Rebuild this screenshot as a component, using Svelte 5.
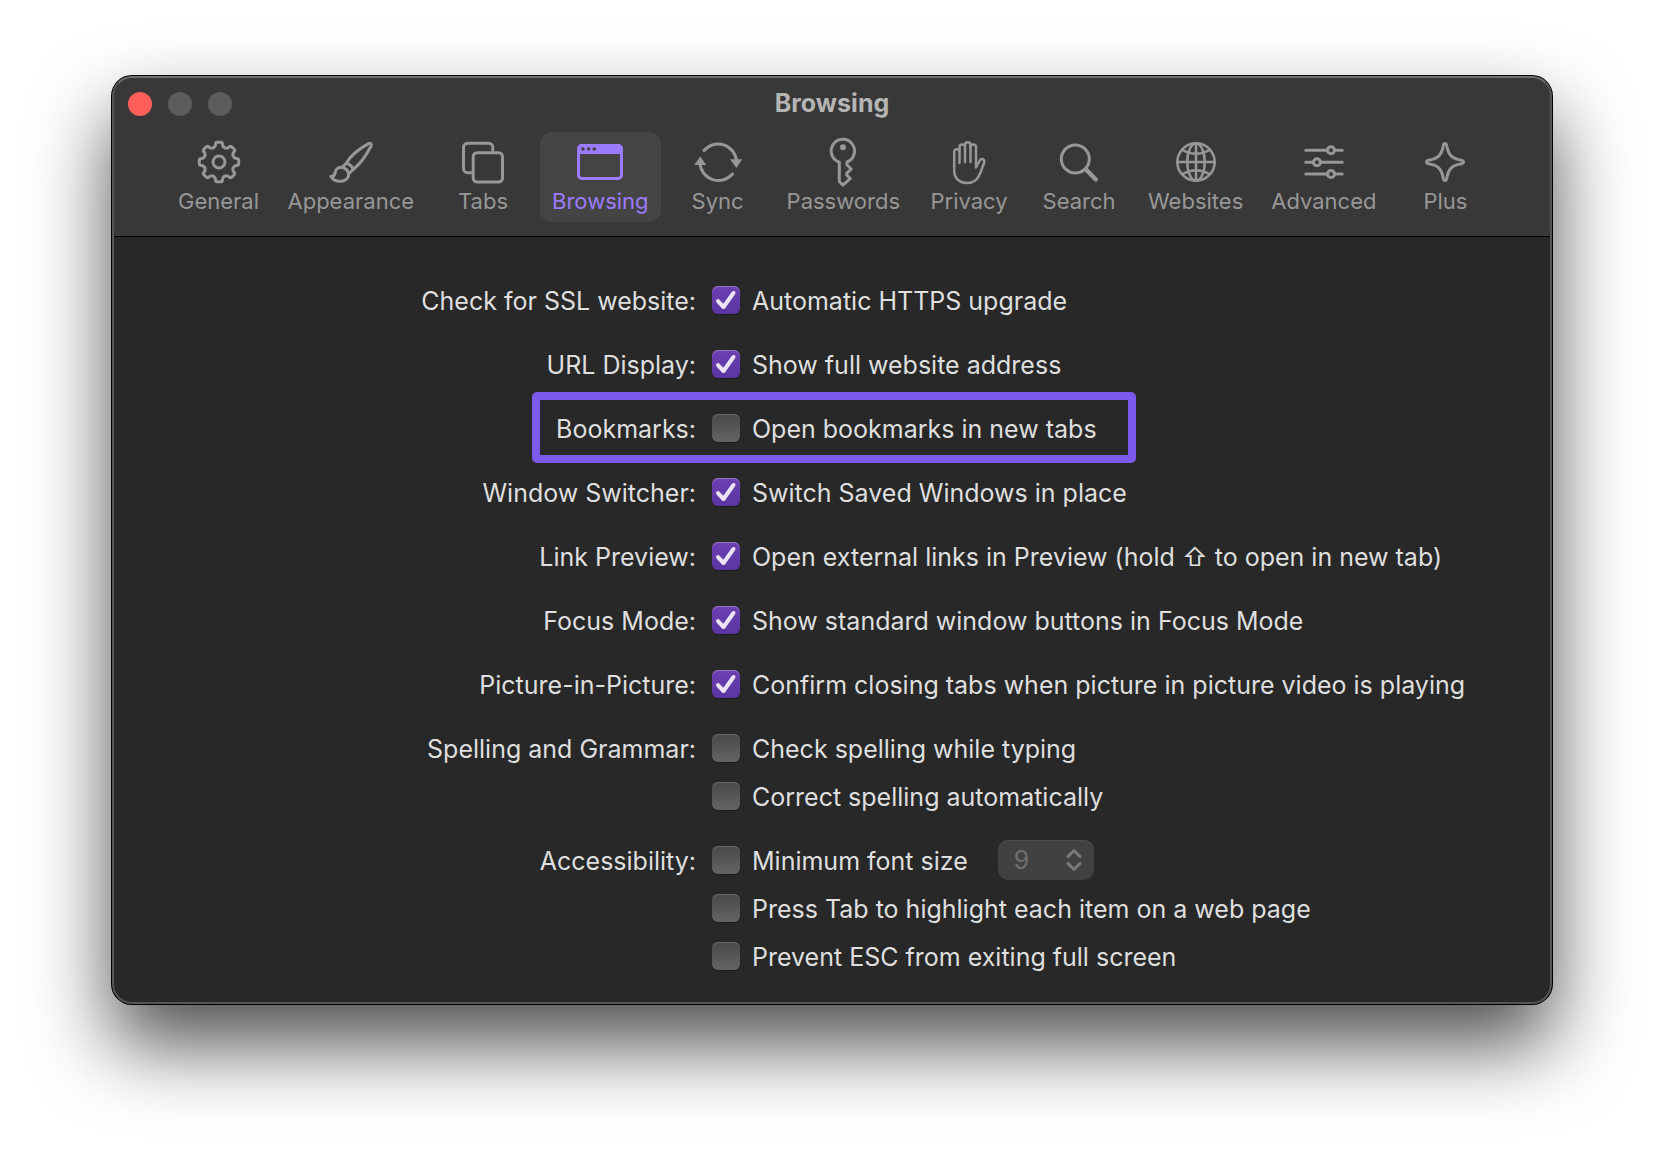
<script lang="ts">
  type Option = { id: string; text: string; checked: boolean; size?: boolean };
  type Row = { label: string; options: Option[]; highlight?: boolean };

  const tabs = [
    'General',
    'Appearance',
    'Tabs',
    'Browsing',
    'Sync',
    'Passwords',
    'Privacy',
    'Search',
    'Websites',
    'Advanced',
    'Plus',
  ];

  let active = $state('Browsing');
  let fontSize = $state('9');

  let rows = $state<Row[]>([
    {
      label: 'Check for SSL website:',
      options: [{ id: 'https', text: 'Automatic HTTPS upgrade', checked: true }],
    },
    {
      label: 'URL Display:',
      options: [{ id: 'url', text: 'Show full website address', checked: true }],
    },
    {
      label: 'Bookmarks:',
      highlight: true,
      options: [{ id: 'bookmarks', text: 'Open bookmarks in new tabs', checked: false }],
    },
    {
      label: 'Window Switcher:',
      options: [{ id: 'switcher', text: 'Switch Saved Windows in place', checked: true }],
    },
    {
      label: 'Link Preview:',
      options: [
        { id: 'preview', text: 'Open external links in Preview (hold ⇧ to open in new tab)', checked: true },
      ],
    },
    {
      label: 'Focus Mode:',
      options: [{ id: 'focus', text: 'Show standard window buttons in Focus Mode', checked: true }],
    },
    {
      label: 'Picture-in-Picture:',
      options: [
        { id: 'pip', text: 'Confirm closing tabs when picture in picture video is playing', checked: true },
      ],
    },
    {
      label: 'Spelling and Grammar:',
      options: [
        { id: 'spell', text: 'Check spelling while typing', checked: false },
        { id: 'correct', text: 'Correct spelling automatically', checked: false },
      ],
    },
    {
      label: 'Accessibility:',
      options: [
        { id: 'minfont', text: 'Minimum font size', checked: false, size: true },
        { id: 'presstab', text: 'Press Tab to highlight each item on a web page', checked: false },
        { id: 'esc', text: 'Prevent ESC from exiting full screen', checked: false },
      ],
    },
  ]);

  let sizeDisabled = $derived(!rows[8].options[0].checked);

  // eight-tooth cog around (24, 24)
  function gear() {
    const pt = (r: number, deg: number) => {
      const a = (deg * Math.PI) / 180;
      return `${(24 + r * Math.sin(a)).toFixed(2)} ${(24 - r * Math.cos(a)).toFixed(2)}`;
    };
    let d = '';
    for (let i = 0; i < 8; i++) {
      const c = i * 45;
      d += `${i ? 'L' : 'M'}${pt(16.6, c - 13)}L${pt(18, c - 11)}Q${pt(19.8, c - 10)} ${pt(19.8, c - 6)}`;
      d += `L${pt(19.8, c + 6)}Q${pt(19.8, c + 10)} ${pt(18, c + 11)}L${pt(16.6, c + 13)}`;
      d += `Q${pt(14.2, c + 22.5)} ${pt(16.6, c + 32)}`;
    }
    return d + 'Z';
  }
</script>

{#snippet icon(name: string)}
  <svg class="icon" viewBox="0 0 48 48" aria-hidden="true">
    {#if name === 'General'}
      <path d={gear()} />
      <circle cx="24" cy="24" r="6" />
    {:else if name === 'Appearance'}
      <path d="M19.3 25.2C23 18.5 29 12.5 41.5 5.6C43.6 4.6 45 6.2 44 8.2C38 19.5 32.5 26.5 26.2 31.5" />
      <path d="M19.3 25.2L15.2 29.3M26.2 31.5L21.7 35.6M19.3 25.2Q24.5 26.2 26.2 31.5" />
      <path d="M15.2 29.3C11.5 29 8.5 31 8.2 34.5C8 37 6.5 38.5 3.8 38.4C6.5 42.5 10.5 43.8 14.5 43.2C19 42.5 22 39.5 21.7 35.6Q20 30.5 15.2 29.3" />
    {:else if name === 'Tabs'}
      <path d="M12.5 34.7H8.5a4 4 0 0 1-4-4V9.3a4 4 0 0 1 4-4H29.8a4 4 0 0 1 4 4V12.5" />
      <rect x="14.2" y="14.7" width="29.3" height="29.3" rx="4" />
    {:else if name === 'Browsing'}
      <rect x="2.5" y="7.5" width="43" height="33" rx="3.5" />
      <path class="solid" d="M1 16V11a5 5 0 0 1 5-5H42a5 5 0 0 1 5 5V16Z" />
      <circle class="dot" cx="7" cy="11" r="1.8" />
      <circle class="dot" cx="12.7" cy="11" r="1.8" />
      <circle class="dot" cx="18.3" cy="11" r="1.8" />
    {:else if name === 'Sync'}
      <path d="M10 12.5A18.5 18.5 0 0 1 42.5 23" />
      <path d="M38.5 36A18.5 18.5 0 0 1 6 25.5" />
      <path class="solid" d="M36 21.3H48.2L42.4 30Z" />
      <path class="solid" d="M0.3 27H12.3L6.2 18.5Z" />
    {:else if name === 'Passwords'}
      <path d="M20.3 24.2A11.7 11.7 0 1 1 28 24V27L32.3 31L27.8 35.2V37.2L31.3 40.5L24 47.2L20.3 43.5Z" />
      <circle class="solid" cx="24" cy="9.3" r="3" />
    {:else if name === 'Privacy'}
      <path
        class="thin"
        d="M14.5 25V13.5C14.5 10.5 9.2 10.5 9.2 13.5V33C9.2 40.5 15 45 22 45C29.5 45 33 41.5 35.5 34.5L39.2 24.5C40 21 36.2 19.8 34.8 22.5L31 29.5V9C31 5.8 25.5 5.8 25.5 9"
      />
      <path class="thin" d="M14.5 13.5V9C14.5 5.8 20 5.8 20 9M20 24V7C20 3.3 25.5 3.3 25.5 7V24" />
    {:else if name === 'Search'}
      <circle cx="20.3" cy="21" r="14" />
      <path class="handle" d="M31.5 32L40.8 41.5" />
    {:else if name === 'Websites'}
      <g class="thin">
        <circle cx="24" cy="24" r="18.7" />
        <ellipse cx="24" cy="24" rx="8.7" ry="18.7" />
        <path d="M24 5.3V42.7M5.3 24H42.7M10.5 12Q24 19.5 37.5 12M10.5 36Q24 28.5 37.5 36" />
      </g>
    {:else if name === 'Advanced'}
      <path d="M5.8 12.3H27.5M34.5 12.3H42.2M5.8 24.3H13.5M20.5 24.3H42.2M5.8 36H27.5M34.5 36H42.2" />
      <circle cx="31" cy="12.3" r="3.5" />
      <circle cx="17" cy="24.3" r="3.5" />
      <circle cx="31" cy="36" r="3.5" />
    {:else}
      <path
        d="M24 5.5C25.3 5.5 25.6 6.5 25.9 8.5C27.5 17 31 20.5 39.5 22.1C41.5 22.4 42.5 22.7 42.5 24C42.5 25.3 41.5 25.6 39.5 25.9C31 27.5 27.5 31 25.9 39.5C25.6 41.5 25.3 42.5 24 42.5C22.7 42.5 22.4 41.5 22.1 39.5C20.5 31 17 27.5 8.5 25.9C6.5 25.6 5.5 25.3 5.5 24C5.5 22.7 6.5 22.4 8.5 22.1C17 20.5 20.5 17 22.1 8.5C22.4 6.5 22.7 5.5 24 5.5Z"
      />
    {/if}
  </svg>
{/snippet}

<main class="desktop">
  <section class="window">
    <header>
      <div class="titlebar">
        <div class="lights">
          <button class="light close" aria-label="Close"></button>
          <button class="light" aria-label="Minimize" disabled></button>
          <button class="light" aria-label="Zoom" disabled></button>
        </div>
        <h1>{active}</h1>
      </div>
      <nav class="toolbar">
        {#each tabs as tab}
          <button class="tab" class:active={active === tab} onclick={() => (active = tab)}>
            {@render icon(tab)}
            <span>{tab}</span>
          </button>
        {/each}
      </nav>
    </header>

    <form class="settings">
      {#each rows as row}
        <div class="row" class:highlight={row.highlight} role="group" aria-label={row.label}>
          <div class="row-label">{row.label}</div>
          <div class="options">
            {#each row.options as option}
              <div class="option">
                <span class="box">
                  <input type="checkbox" id={option.id} bind:checked={option.checked} />
                  {#if option.checked}
                    <svg class="tick" viewBox="0 0 28 28" aria-hidden="true">
                      <path d="M6 15.2L11.5 21L21.5 7" />
                    </svg>
                  {/if}
                </span>
                <label for={option.id}>{option.text}</label>
                {#if option.size}
                  <span class="stepper">
                    <select bind:value={fontSize} disabled={sizeDisabled} aria-label="Font size">
                      {#each ['9', '10', '11', '12', '14', '18', '24'] as size}
                        <option value={size}>{size}</option>
                      {/each}
                    </select>
                    <svg class="chevrons" viewBox="0 0 16 24" aria-hidden="true">
                      <path d="M2 8.5L8 2.5L14 8.5M2 15.5L8 21.5L14 15.5" />
                    </svg>
                  </span>
                {/if}
              </div>
            {/each}
          </div>
        </div>
      {/each}
    </form>
  </section>
</main>

<style>
  :global(body) {
    background: #fff;
  }

  .desktop {
    padding: 76px 112px 148px;
    font-family: Inter, 'Liberation Sans', sans-serif;
  }

  .window {
    position: relative;
    border-radius: 20px;
    background: #282828;
    box-shadow:
      0 0 0 1px #000,
      0 40px 80px rgba(0, 0, 0, 0.7);
    overflow: hidden;
  }
  /* light rim drawn over the content */
  .window::after {
    content: '';
    position: absolute;
    inset: 0;
    border: 2px solid #555;
    border-top-color: #6e706d;
    border-radius: 20px;
    pointer-events: none;
  }

  header {
    background: #383838;
    border-bottom: 1px solid #000;
    padding-bottom: 14px;
  }

  /* ── Title bar ── */
  .titlebar {
    display: grid;
    grid-template-columns: 1fr auto 1fr;
    align-items: center;
    height: 56px;
    padding: 0 16px;
  }
  .lights {
    display: flex;
    gap: 16px;
  }
  .light {
    width: 24px;
    height: 24px;
    padding: 0;
    border: none;
    border-radius: 50%;
    background: #5c5c5c;
  }
  .light.close {
    background: #ff5f5a;
  }
  h1 {
    margin: 0;
    padding-bottom: 2px;
    font-size: 25px;
    font-weight: 700;
    line-height: 32px;
    color: #b5b5b5;
  }

  /* ── Toolbar ── */
  .toolbar {
    display: flex;
    justify-content: center;
    gap: 4px;
  }
  .tab {
    display: flex;
    flex-direction: column;
    align-items: center;
    min-width: 106px;
    height: 90px;
    padding: 6px 12px 0;
    border: none;
    border-radius: 12px;
    background: none;
    color: #979797;
    font-family: inherit;
    font-size: 22px;
    line-height: 30px;
  }
  .tab.active {
    background: #444;
    color: #9d7bff;
  }
  .icon {
    flex-shrink: 0;
    width: 48px;
    height: 48px;
    overflow: visible;
    fill: none;
    stroke: currentColor;
    stroke-width: 3;
    stroke-linecap: round;
    stroke-linejoin: round;
  }
  .icon .solid {
    fill: currentColor;
    stroke: none;
  }
  .icon .dot {
    fill: #444;
    stroke: none;
  }
  .icon .thin {
    stroke-width: 2.5;
  }
  .icon .handle {
    stroke-width: 4.4;
  }

  /* ── Settings ── */
  .settings {
    display: flex;
    flex-direction: column;
    gap: 34px;
    padding: 49px 0 32px;
    color: #dfdfdf;
    font-size: 25px;
    line-height: 30px;
  }
  .row {
    position: relative;
    display: grid;
    grid-template-columns: 73fr 105fr;
    column-gap: 16px;
  }
  .row.highlight::after {
    content: '';
    position: absolute;
    inset: -22px 28.9% -19px 29.2%;
    border: 8px solid #7b5aec;
    border-radius: 5px;
    pointer-events: none;
  }
  .row-label {
    text-align: right;
  }
  .options {
    display: flex;
    flex-direction: column;
    gap: 18px;
  }
  .option {
    display: flex;
    align-items: flex-start;
    height: 30px;
    white-space: nowrap;
  }
  .box {
    position: relative;
    width: 28px;
    height: 28px;
    margin-right: 12px;
  }
  .box input {
    display: block;
    width: 28px;
    height: 28px;
    margin: 0;
    appearance: none;
    border-radius: 6px;
    background: linear-gradient(#484848, #646464);
    box-shadow:
      inset 0 1px 0 rgba(255, 255, 255, 0.18),
      0 1px 1px rgba(0, 0, 0, 0.3);
  }
  .box input:checked {
    background: linear-gradient(#6c40b4, #5c35a0);
    box-shadow:
      inset 0 1px 0 rgba(255, 255, 255, 0.3),
      0 1px 1px rgba(0, 0, 0, 0.3);
  }
  .tick {
    position: absolute;
    inset: 0;
    fill: none;
    stroke: #ebe4f6;
    stroke-width: 4;
    stroke-linecap: round;
    stroke-linejoin: round;
    pointer-events: none;
  }

  /* ── Font size picker ── */
  .stepper {
    position: relative;
    margin: -6px 0 0 30px;
  }
  select {
    display: block;
    width: 96px;
    height: 40px;
    padding: 0 16px;
    appearance: none;
    border: none;
    border-radius: 10px;
    background: #414141;
    box-shadow: inset 0 1px 0 #4c4c4c;
    color: #dfdfdf;
    font: inherit;
  }
  select:disabled {
    color: #6f6f6f;
    opacity: 1;
  }
  .chevrons {
    position: absolute;
    top: 8px;
    right: 12px;
    width: 16px;
    height: 24px;
    fill: none;
    stroke: #7a7a7a;
    stroke-width: 3;
    stroke-linecap: round;
    stroke-linejoin: round;
    pointer-events: none;
  }
</style>
